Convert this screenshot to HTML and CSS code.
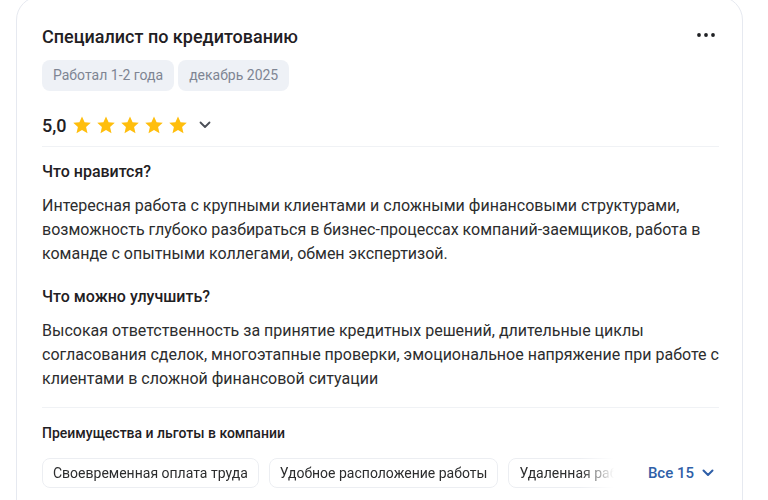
FILE: index.html
```html
<!DOCTYPE html>
<html lang="ru">
<head>
<meta charset="utf-8">
<link rel="stylesheet" href="styles.css">
</head>
<body>
<div class="card">
  <div class="head">
    <h2 class="title">Специалист по кредитованию</h2>
    <button class="more" aria-label="Ещё">
      <svg width="18" height="4" viewBox="0 0 18 4"><circle cx="2" cy="2" r="1.9"/><circle cx="9" cy="2" r="1.9"/><circle cx="16" cy="2" r="1.9"/></svg>
    </button>
  </div>
  <div class="tags">
    <span class="tag">Работал 1-2 года</span>
    <span class="tag">декабрь 2025</span>
  </div>
  <div class="rating">
    <span class="score">5,0</span>
    <span class="stars">
      <svg class="star" viewBox="0 0 24 24"><path d="M12 1.8l3.1 6.9 7.4.7-5.6 5 1.7 7.4L12 17.9l-6.6 3.9 1.7-7.4-5.6-5 7.4-.7z"/></svg>
      <svg class="star" viewBox="0 0 24 24"><path d="M12 1.8l3.1 6.9 7.4.7-5.6 5 1.7 7.4L12 17.9l-6.6 3.9 1.7-7.4-5.6-5 7.4-.7z"/></svg>
      <svg class="star" viewBox="0 0 24 24"><path d="M12 1.8l3.1 6.9 7.4.7-5.6 5 1.7 7.4L12 17.9l-6.6 3.9 1.7-7.4-5.6-5 7.4-.7z"/></svg>
      <svg class="star" viewBox="0 0 24 24"><path d="M12 1.8l3.1 6.9 7.4.7-5.6 5 1.7 7.4L12 17.9l-6.6 3.9 1.7-7.4-5.6-5 7.4-.7z"/></svg>
      <svg class="star" viewBox="0 0 24 24"><path d="M12 1.8l3.1 6.9 7.4.7-5.6 5 1.7 7.4L12 17.9l-6.6 3.9 1.7-7.4-5.6-5 7.4-.7z"/></svg>
    </span>
    <svg class="chev" viewBox="0 0 12 8"><path d="M1.5 1.5L6 6l4.5-4.5"/></svg>
  </div>
  <div class="sep"></div>
  <section class="block first">
    <h3 class="q">Что нравится?</h3>
    <p class="text">Интересная работа с крупными клиентами и сложными финансовыми структурами, возможность глубоко разбираться в бизнес-процессах компаний-заемщиков, работа в команде с опытными коллегами, обмен экспертизой.</p>
  </section>
  <section class="block second">
    <h3 class="q">Что можно улучшить?</h3>
    <p class="text">Высокая ответственность за принятие кредитных решений, длительные циклы согласования сделок, многоэтапные проверки, эмоциональное напряжение при работе с клиентами в сложной финансовой ситуации</p>
  </section>
  <div class="sep sep2"></div>
  <div class="benefits">
    <h4 class="blabel">Преимущества и льготы в компании</h4>
    <div class="brow">
      <div class="chips">
        <span class="chip">Своевременная оплата труда</span>
        <span class="chip">Удобное расположение работы</span>
        <span class="chip">Удаленная работа</span>
      </div>
      <button class="all">Все 15
        <svg class="chev blue" viewBox="0 0 12 8"><path d="M1.5 1.5L6 6l4.5-4.5"/></svg>
      </button>
    </div>
  </div>
</div>
</body>
</html>
```

FILE: styles.css
```css
* { box-sizing: border-box; }
html, body { margin: 0; padding: 0; background: #fff; }
body {
  font-family: Roboto, "Noto Sans", Arial, sans-serif;
  color: #2c2d2e;
  overflow: hidden;
  height: 500px;
}
.card {
  margin: -4px 25px 0 16px;
  border: 1px solid #e6e9f0;
  border-radius: 24px;
  padding: 28px 23px 40px 25px;
  height: 560px;
}
.head {
  display: flex;
  align-items: center;
  justify-content: space-between;
}
.title {
  margin: 0;
  font-size: 18px;
  line-height: 24px;
  font-weight: 500;
  color: #1f2023;
}
.more {
  border: 0;
  background: none;
  padding: 0;
  margin-right: 4px;
  width: 18px;
  height: 20px;
  display: flex;
  align-items: center;
  fill: #1f2023;
  position: relative;
  top: -2px;
}
.tags {
  display: flex;
  gap: 4px;
  margin-top: 11px;
}
.tag {
  background: #eef1f6;
  color: #7e8593;
  font-size: 14px;
  line-height: 31px;
  height: 31px;
  padding: 0 11px;
  border-radius: 8px;
}
.rating {
  display: flex;
  align-items: center;
  margin-top: 22px;
  height: 24px;
}
.score {
  font-size: 18px;
  font-weight: 500;
  color: #1f2023;
  margin-right: 5px;
}
.stars { display: flex; gap: 4px; }
.star { width: 20px; height: 20px; fill: #ffbe0d; display: block; }
.chev {
  width: 12px;
  height: 8px;
  fill: none;
  stroke: #4b4f57;
  stroke-width: 1.8;
  stroke-linecap: round;
  stroke-linejoin: round;
  margin-left: 11px;
}
.sep {
  height: 1px;
  background: #f0f2f5;
  margin-top: 9px;
}
.block .q {
  margin: 0;
  font-size: 16px;
  line-height: 24px;
  font-weight: 500;
  color: #1f2023;
}
.block.first { margin-top: 13px; }
.block.second { margin-top: 19px; }
.text {
  margin: 10px 0 0;
  font-size: 16px;
  line-height: 24px;
  color: #2c2d2e;
}
.sep2 { margin-top: 16px; }
.benefits { margin-top: 15px; }
.blabel {
  margin: 0;
  font-size: 14px;
  line-height: 20px;
  font-weight: 500;
  color: #1f2023;
}
.brow {
  display: flex;
  align-items: center;
  margin-top: 15px;
}
.chips {
  flex: 1;
  display: flex;
  gap: 10px;
  overflow: hidden;
  white-space: nowrap;
  -webkit-mask-image: linear-gradient(to right, #000 calc(100% - 38px), transparent calc(100% - 4px));
  mask-image: linear-gradient(to right, #000 calc(100% - 38px), transparent calc(100% - 4px));
}
.chip {
  flex: none;
  height: 30px;
  line-height: 28px;
  border: 1px solid #eceef2;
  border-radius: 8px;
  padding: 0 10px;
  font-size: 14px;
  color: #2c2d2e;
}
.all {
  flex: none;
  border: 0;
  background: none;
  font-family: inherit;
  font-size: 15px;
  font-weight: 500;
  color: #2f5fa8;
  display: flex;
  align-items: center;
  padding: 0 5px 0 30px;
}
.chev.blue { stroke: #2f5fa8; margin-left: 8px; stroke-width: 2; }
```
